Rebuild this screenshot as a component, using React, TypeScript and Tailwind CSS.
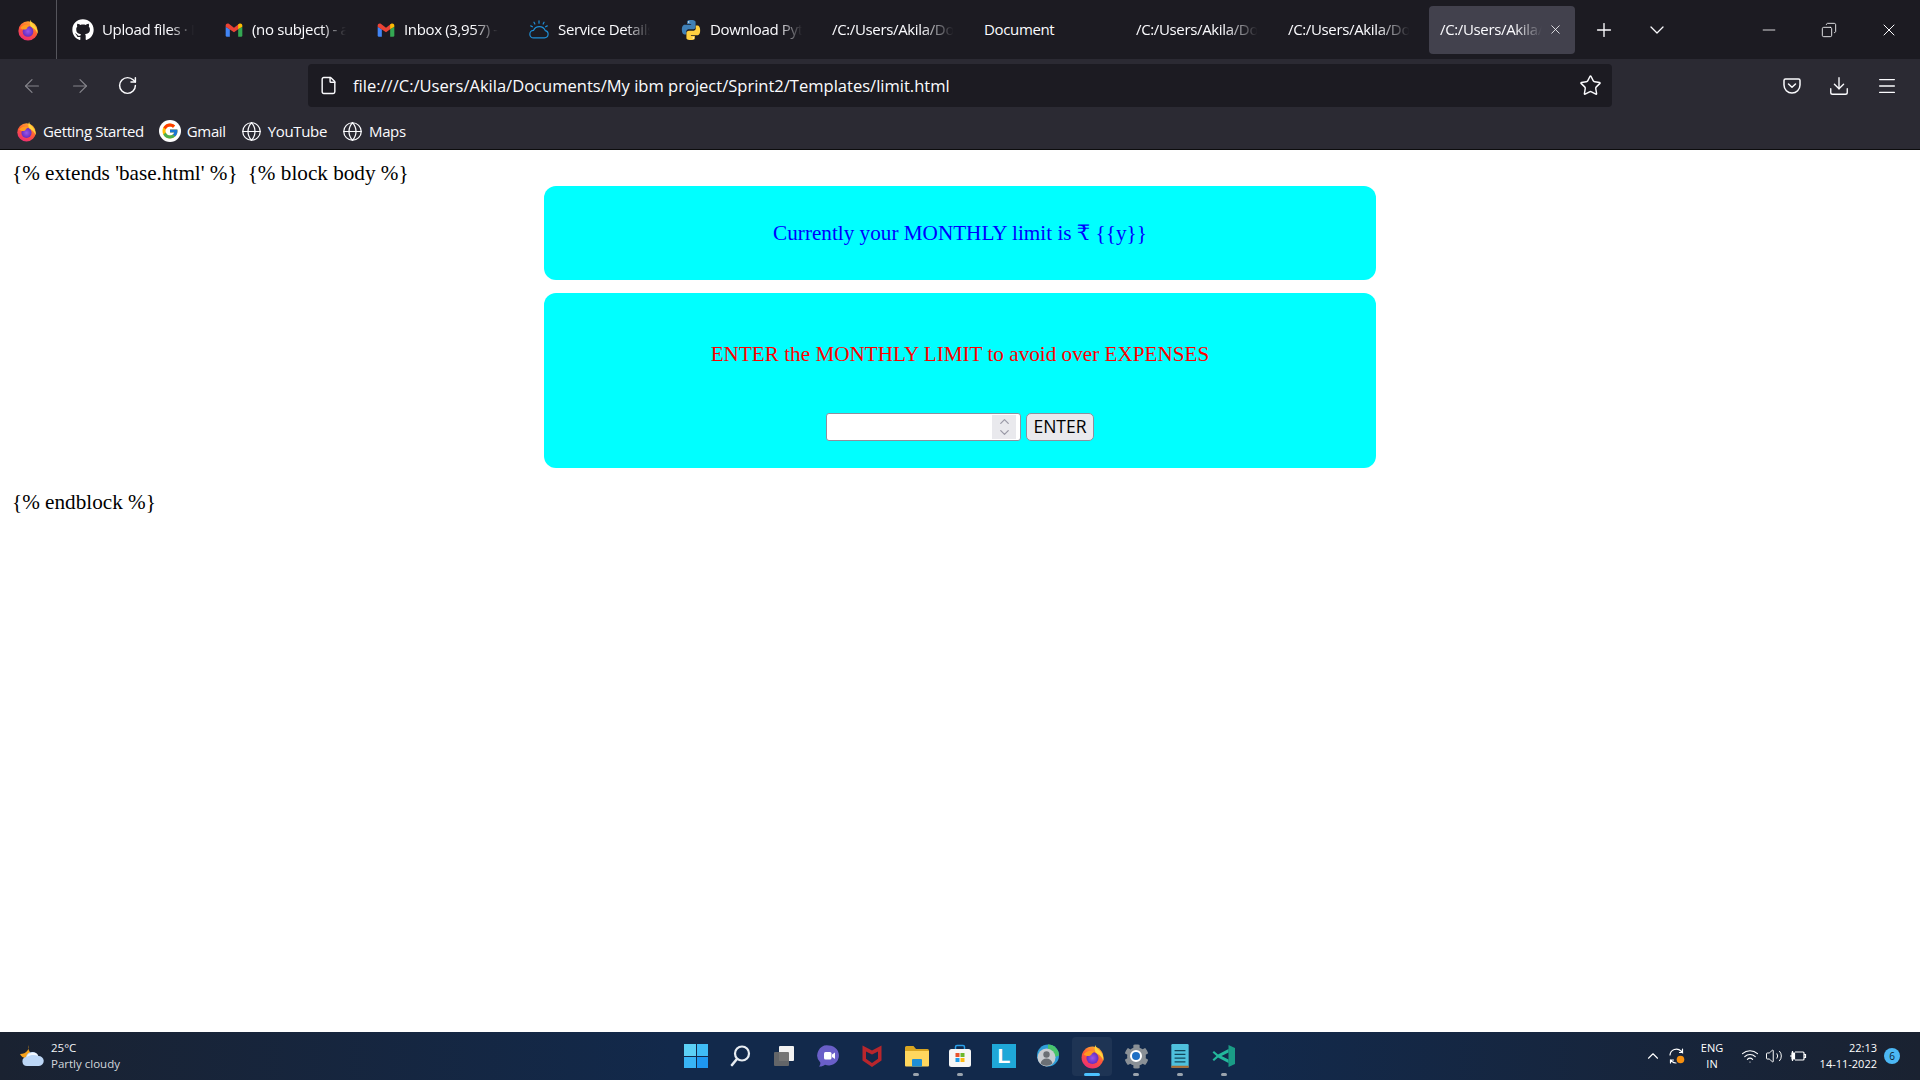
import { ArrowLeft, ArrowRight, RotateCw, File, Star, Download, Menu, Plus, ChevronDown, ChevronUp, Minus, X, Copy, Globe, Wifi, Volume2 } from "lucide-react"
import { FaGithub, FaCog } from "react-icons/fa"
import { FcGoogle } from "react-icons/fc"
import type { ReactNode } from "react"

const uiFont = "font-['Open_Sans','Noto_Sans',sans-serif]"

function Firefox({ size = 22 }: { size?: number }) {
    return (
        <svg width={size} height={size} viewBox="0 0 24 24">
            <defs>
                <linearGradient id="ffbody" x1="0.8" y1="0" x2="0.3" y2="1">
                    <stop offset="0" stopColor="#ffb52e" />
                    <stop offset="0.5" stopColor="#ff5a36" />
                    <stop offset="1" stopColor="#ec2a78" />
                </linearGradient>
                <radialGradient id="ffcore" cx="0.5" cy="0.5" r="0.6">
                    <stop offset="0" stopColor="#9a55e8" />
                    <stop offset="1" stopColor="#5a25b8" />
                </radialGradient>
            </defs>
            <circle cx="12" cy="13" r="10.500" fill="url(#ffbody)" />
            <path d="M15 .8c0 3 2.500 4 4.500 6.500 2.500 3 3.500 6 3 9-1-3.500-3.500-6-6-7-2.500-1.200-3-5-1.500-8.500z" fill="#ffd43b" />
            <circle cx="12" cy="13.500" r="5.800" fill="url(#ffcore)" />
            <path d="M3.500 10c2.500-3.500 7-4.500 10.500-2.800-1 1.300-2.500 1.400-3 2.800-.6 1.500-4 2.300-7.500 0z" fill="#ff9a1f" />
        </svg>
    )
}

function Gmail() {
    return (
        <svg width="20" height="20" viewBox="0 0 24 24">
            <path d="M2 8v10.500A1.500 1.500 0 0 0 3.500 20H7v-9z" fill="#4285f4" />
            <path d="M22 8v10.500a1.500 1.500 0 0 1-1.500 1.500H17v-9z" fill="#34a853" />
            <path d="M2 6.500C2 4.500 4.300 3.400 5.800 4.600L12 9.300l6.200-4.700c.2 2 .2 4-1.200 6.400L12 14.800 2 8z" fill="#ea4335" />
            <path d="M17 5.500l1.200-.9C19.700 3.400 22 4.500 22 6.500V8l-5 3z" fill="#fbbc04" />
        </svg>
    )
}

function IbmCloud() {
    return (
        <svg width="22" height="22" viewBox="0 0 24 24" fill="none" stroke="#1f8fd6" strokeWidth="1.300" strokeLinecap="round">
            <path d="M6 20.500h12a4 4 0 0 0 .8-7.900A7 7 0 0 0 6 12.500a4 4 0 0 0 0 8z" />
            <path d="M12 2v2.500M6.500 3.500l1 2M17.500 3.500l-1 2M3 7.500l1.800 1M21 7.500l-1.800 1" />
        </svg>
    )
}

function Python() {
    const snake = "M11.900 1C7.500 1 7.800 3 7.800 3v2.500h4.300v.7H5.400S2 5.900 2 11.500s3 5.400 3 5.400h1.800v-2.600s-.1-3 3-3h4.300s2.900 0 2.900-2.800V3.400S17.400 1 11.900 1z"
    return (
        <svg width="22" height="22" viewBox="0 0 24 24">
            <path d={snake} fill="#3f7fb5" />
            <circle cx="9.500" cy="3.300" r=".8" fill="#fff" />
            <path d={snake} fill="#ffd040" transform="rotate(180 12 12)" />
            <circle cx="14.500" cy="20.700" r=".8" fill="#fff" />
        </svg>
    )
}

function FadeTab({ icon, text, fade = true }: { icon?: ReactNode; text: string; fade?: boolean }) {
    return (
        <div className="w-[146px] h-[48px] mx-[3px] px-[11px] flex items-center gap-2 shrink-0 overflow-hidden">
            {icon}
            <span className={`whitespace-nowrap overflow-hidden flex-1 text-[15px] tracking-[-0.35px] text-[#fbfbfe] ${fade ? "[mask-image:linear-gradient(to_right,black_72%,transparent_98%)]" : ""}`}>
                {text}
            </span>
        </div>
    )
}

function TabBar() {
    return (
        <div className={`h-[59px] bg-[#1c1b22] flex items-center ${uiFont}`}>
            <div className="w-[57px] h-full border-r border-[#55555c] flex items-center justify-center shrink-0">
                <Firefox />
            </div>
            <div className="flex items-center ml-[1px]">
                <FadeTab icon={<FaGithub size={22} className="text-white shrink-0" />} text="Upload files · IBM" />
                <FadeTab icon={<Gmail />} text="(no subject) - akila" />
                <FadeTab icon={<Gmail />} text="Inbox (3,957) - akila" />
                <FadeTab icon={<IbmCloud />} text="Service Details" />
                <FadeTab icon={<Python />} text="Download Python" />
                <FadeTab text="/C:/Users/Akila/Documents" />
                <FadeTab text="Document" fade={false} />
                <FadeTab text="/C:/Users/Akila/Documents" />
                <FadeTab text="/C:/Users/Akila/Documents" />
                <div className="w-[146px] h-[48px] mx-[3px] pl-[11px] pr-[12px] flex items-center rounded-[4px] bg-[#42414d] shrink-0">
                    <span className="flex-1 whitespace-nowrap overflow-hidden text-[15px] tracking-[-0.35px] text-[#fbfbfe] [mask-image:linear-gradient(to_right,black_72%,transparent_98%)]">
                        /C:/Users/Akila/Documents
                    </span>
                    <X size={15} strokeWidth={1.300} className="text-[#fbfbfe] ml-1 shrink-0" />
                </div>
            </div>
            <Plus size={22} strokeWidth={1.500} className="text-[#fbfbfe] ml-[15px]" />
            <ChevronDown size={24} strokeWidth={1.300} className="text-[#fbfbfe] ml-[30px]" />
            <div className="ml-auto flex items-center pr-[21px] gap-[42px] text-[#fbfbfe]">
                <Minus size={20} strokeWidth={1} />
                <Copy size={16} strokeWidth={1.300} className="-scale-x-100" />
                <X size={20} strokeWidth={1.200} />
            </div>
        </div>
    )
}

function Bookmark({ icon, label }: { icon: ReactNode; label: string }) {
    return (
        <div className="flex items-center gap-[6px] mr-[15px]">
            {icon}
            <span className="text-[15px] tracking-[-0.35px] text-[#fbfbfe]">{label}</span>
        </div>
    )
}

function Toolbar() {
    return (
        <div className={`h-[91px] bg-[#2b2a33] border-b border-[#0c0c0d] ${uiFont}`}>
            <div className="h-[53px] flex items-center">
                <div className="w-[308px] pl-[21px] flex items-center gap-[26px] shrink-0">
                    <ArrowLeft size={22} strokeWidth={1.300} className="text-[#85848b]" />
                    <ArrowRight size={22} strokeWidth={1.300} className="text-[#85848b]" />
                    <RotateCw size={21} strokeWidth={1.700} className="text-[#fbfbfe]" />
                </div>
                <div className="w-[1304px] h-[43px] rounded-[4px] bg-[#1c1b22] flex items-center pl-[11px] pr-[10px] shrink-0">
                    <File size={19} strokeWidth={1.800} className="text-[#fbfbfe]" />
                    <span className="ml-[15px] pt-[2px] text-[16.550px] text-[#fbfbfe]">file:///C:/Users/Akila/Documents/My ibm project/Sprint2/Templates/limit.html</span>
                    <Star size={23} strokeWidth={1.500} className="ml-auto text-[#fbfbfe]" />
                </div>
                <div className="flex items-center text-[#fbfbfe] pl-[170px] gap-[26px]">
                    <svg width="20" height="20" viewBox="0 0 20 20" fill="none" stroke="currentColor" strokeWidth="1.500" strokeLinecap="round" strokeLinejoin="round">
                        <path d="M3.500 3h13A1.500 1.500 0 0 1 18 4.500V9a8 8 0 0 1-16 0V4.500A1.500 1.500 0 0 1 3.500 3z" />
                        <path d="M6.500 8l3.500 3.300L13.500 8" />
                    </svg>
                    <Download size={22} strokeWidth={1.500} />
                    <Menu size={22} strokeWidth={1.500} />
                </div>
            </div>
            <div className="h-[37px] pl-[16px] pt-[1px] flex items-center">
                <Bookmark icon={<Firefox size={21} />} label="Getting Started" />
                <Bookmark icon={<span className="w-[22px] h-[22px] rounded-full bg-white flex items-center justify-center"><FcGoogle size={18} /></span>} label="Gmail" />
                <Bookmark icon={<Globe size={21} strokeWidth={1.400} className="text-[#fbfbfe]" />} label="YouTube" />
                <Bookmark icon={<Globe size={21} strokeWidth={1.400} className="text-[#fbfbfe]" />} label="Maps" />
            </div>
        </div>
    )
}

function PageBody() {
    return (
        <div className="flex-1 bg-white px-[12px] pt-[11px] text-[21.200px] leading-[24px] text-black font-['Liberation_Serif','DejaVu_Serif',serif]">
            <p>
                <span>{"{% extends 'base.html' %}"}</span>
                <span className="ml-[10px]">{"{% block body %}"}</span>
            </p>
            <div className="w-[832px] h-[94px] mx-auto mt-[1px] rounded-xl bg-[#00ffff] flex items-center justify-center text-[#0000ff]">
                Currently your MONTHLY limit is ₹ {"{{y}}"}
            </div>
            <div className="w-[832px] h-[175px] mx-auto mt-[13px] pt-[49px] rounded-xl bg-[#00ffff] flex flex-col items-center">
                <p className="text-[#ff0000]">ENTER the MONTHLY LIMIT to avoid over EXPENSES</p>
                <div className={`flex gap-[5px] mt-[47px] ${uiFont}`}>
                    <div className="w-[195px] h-[28px] bg-white rounded-[3px] border border-[#8f8f9d] flex justify-end items-center pr-[4px]">
                        <div className="w-[24px] h-[24px] bg-[#e9e9ed] flex flex-col items-center justify-center text-[#9a99a6]">
                            <ChevronUp size={15} strokeWidth={2} className="-my-[2px]" />
                            <ChevronDown size={15} strokeWidth={2} className="-my-[2px]" />
                        </div>
                    </div>
                    <button className="w-[68px] h-[28px] rounded-[5px] border border-[#8f8f9d] bg-[#e9e9ed] text-[17.500px] text-black leading-none">ENTER</button>
                </div>
            </div>
            <p className="mt-[22px]">{"{% endblock %}"}</p>
        </div>
    )
}

function TaskIcon({ children, dot, active }: { children: ReactNode; dot?: boolean; active?: boolean }) {
    return (
        <div className={`relative w-[40px] h-[39px] mx-[2px] rounded-[4px] flex items-center justify-center ${active ? "bg-white/5" : ""}`}>
            {children}
            {dot && <span className="absolute bottom-[0px] left-[17px] w-[6px] h-[3px] rounded-full bg-[#9aa3ad]" />}
            {active && <span className="absolute bottom-[0px] left-[12px] w-[16px] h-[3px] rounded-full bg-[#4cc2ff]" />}
        </div>
    )
}

function TaskbarIcons() {
    return (
        <div className="flex items-center">
            <TaskIcon>
                <div className="grid grid-cols-2 gap-[1px] w-[24px] h-[24px]">
                    <span className="bg-[#5cd0f5]" />
                    <span className="bg-[#3fbcf5]" />
                    <span className="bg-[#38b4f5]" />
                    <span className="bg-[#1e97f0]" />
                </div>
            </TaskIcon>
            <TaskIcon>
                <svg width="24" height="24" viewBox="0 0 24 24" fill="none" stroke="#e8edf2" strokeLinecap="round">
                    <circle cx="14" cy="9.500" r="7" strokeWidth="2.200" />
                    <path d="M8.500 15.500L4 21" strokeWidth="2.600" />
                </svg>
            </TaskIcon>
            <TaskIcon>
                <svg width="24" height="24" viewBox="0 0 24 24">
                    <rect x="7" y="2" width="15" height="15" rx="1" fill="#f2f2f2" />
                    <rect x="2" y="8" width="15" height="14" rx="1" fill="#6a6a6a" fillOpacity=".92" />
                </svg>
            </TaskIcon>
            <TaskIcon>
                <svg width="24" height="24" viewBox="0 0 24 24">
                    <path d="M13 1.500a10 10 0 1 1-4 19.200c-1.500 1.300-3.800 2-6 1.800 1-1 1.500-2.300 1.300-4A10 10 0 0 1 13 1.500z" fill="#6a5fc8" />
                    <rect x="8" y="8" width="7.500" height="7.500" rx="1.500" fill="#fff" />
                    <path d="M16 10.500l3-2v6.500l-3-2z" fill="#fff" />
                </svg>
            </TaskIcon>
            <TaskIcon>
                <svg width="24" height="24" viewBox="0 0 24 24">
                    <path d="M2.500 1.500l9.500 5 9.500-5v15L12 23l-9.500-6.500z" fill="#b8262c" />
                    <path d="M6 7.500v7.300L12 19l6-4.200V7.500l-6 3z" fill="#12284a" />
                </svg>
            </TaskIcon>
            <TaskIcon dot>
                <svg width="25" height="24" viewBox="0 0 25 24">
                    <path d="M1 3.500A1.500 1.500 0 0 1 2.500 2h7l2.500 3h11.500A1.500 1.500 0 0 1 25 6.500V10H1z" fill="#d9a521" />
                    <path d="M1 7h24v14.500a1 1 0 0 1-1 1H2a1 1 0 0 1-1-1z" fill="#ffd75e" />
                    <rect x="8" y="15" width="10" height="7.500" rx="1" fill="#1f8fd6" />
                </svg>
            </TaskIcon>
            <TaskIcon dot>
                <svg width="24" height="24" viewBox="0 0 24 24">
                    <path d="M7.500 6V3a1.500 1.500 0 0 1 1.500-1.500h6A1.500 1.500 0 0 1 16.500 3v3" fill="none" stroke="#2aa0e8" strokeWidth="1.500" />
                    <rect x="1" y="5" width="22" height="18" rx="2.500" fill="#f6f6f6" />
                    <rect x="7.500" y="9" width="4" height="4" fill="#e8532d" />
                    <rect x="12.500" y="9" width="4" height="4" fill="#6cb82e" />
                    <rect x="7.500" y="14" width="4" height="4" fill="#1f9be8" />
                    <rect x="12.500" y="14" width="4" height="4" fill="#fdb913" />
                </svg>
            </TaskIcon>
            <TaskIcon>
                <span className="w-[24px] h-[24px] bg-[#1fa8d8] text-white font-bold text-[21px] leading-[24px] text-center font-['Liberation_Sans',sans-serif]">L</span>
            </TaskIcon>
            <TaskIcon>
                <svg width="24" height="24" viewBox="0 0 24 24">
                    <circle cx="12" cy="11.500" r="11" fill="#2f9ed8" />
                    <path d="M12 .5a11 11 0 0 1 11 11l-6 2-5-8z" fill="#49c46c" />
                    <circle cx="10.500" cy="13.500" r="9" fill="#c9ccd0" />
                    <circle cx="10.500" cy="10.500" r="3.200" fill="#6b6f74" />
                    <path d="M4.500 19.500c.8-3.500 3.200-5 6-5s5.200 1.500 6 5a9 9 0 0 1-12 0z" fill="#6b6f74" />
                </svg>
            </TaskIcon>
            <TaskIcon active>
                <Firefox size={25} />
            </TaskIcon>
            <TaskIcon dot>
                <FaCog size={25} className="text-[#8a9096]" />
                <span className="absolute left-[14px] top-[13px] w-[12px] h-[12px] rounded-full bg-[#1f6fc4] border-2 border-white" />
            </TaskIcon>
            <TaskIcon dot>
                <svg width="24" height="26" viewBox="0 0 20 24">
                    <rect x="2" y="1" width="16" height="22" rx="1" fill="#4fc0dc" />
                    <rect x="2" y="21" width="16" height="2" fill="#a86a32" />
                    <path d="M5 7h10M5 10.500h10M5 14h10M5 17.500h10" stroke="#12465a" strokeWidth="1.200" />
                </svg>
            </TaskIcon>
            <TaskIcon dot>
                <svg width="24" height="24" viewBox="0 0 24 24">
                    <path d="M16.500 1L23 4v16l-6.500 3z" fill="#1a9c86" />
                    <path d="M16.500 5v3.500L9.500 12l7 3.500V19L6 13.500 2 17l-1.500-1.500L4.500 12 .5 8.500 2 7l4 3.500z" fill="#23b89c" />
                </svg>
            </TaskIcon>
        </div>
    )
}

function Tray() {
    return (
        <div className="flex items-center justify-end h-full text-white">
            <ChevronUp size={18} strokeWidth={1.500} />
            <svg className="ml-[6px]" width="18" height="18" viewBox="0 0 18 18" fill="none" stroke="#fff" strokeWidth="1.200" strokeLinecap="round">
                <path d="M2 8a6.500 6.500 0 0 1 11-4l1.500 1.500V2M14.500 5.500h-3" />
                <path d="M2.500 16v-3h3M2.500 13L4 14.500A6 6 0 0 0 8 16" />
                <circle cx="12.500" cy="12.500" r="3.800" fill="#f7900f" stroke="none" />
            </svg>
            <div className="ml-[13px] w-[26px] text-center text-[11px] leading-[16px]">
                <div>ENG</div>
                <div>IN</div>
            </div>
            <Wifi size={18} strokeWidth={1.500} className="ml-[16px]" />
            <Volume2 size={18} strokeWidth={1.300} className="ml-[6px]" />
            <svg className="ml-[6px]" width="18" height="16" viewBox="0 0 18 16" fill="none" stroke="#fff" strokeWidth="1.200">
                <path d="M6 4h8a1 1 0 0 1 1 1v6a1 1 0 0 1-1 1H6M15 6.500h1.500v3H15" />
                <path d="M1 8h2M3 5h2.500v6H3zM3.500 3v2M3.500 11v2" fill="#fff" />
            </svg>
            <div className="ml-[10px] w-[60px] text-right text-[11px] leading-[16px]">
                <div>22:13</div>
                <div>14-11-2022</div>
            </div>
            <span className="ml-[7px] mr-[20px] w-[16px] h-[16px] rounded-full bg-[#4cb8f5] text-[#0b2030] text-[10px] leading-[16px] text-center">6</span>
        </div>
    )
}

function Taskbar() {
    return (
        <div className={`h-[48px] grid grid-cols-[1fr_auto_1fr] items-center bg-[linear-gradient(to_right,#1a2231,#12294b_35%,#12294b_65%,#1a2231)] ${uiFont}`}>
            <div className="flex items-center pl-[20px] gap-[7px]">
                <svg width="24" height="24" viewBox="0 0 24 24">
                    <path d="M9 1a7 7 0 0 0 3 9 7 7 0 0 1-6 4 7 7 0 0 1-6-4c3 0 6-1 7.500-3.500C8.500 5 9 3 9 1z" fill="#f7a21b" />
                    <path d="M7 22a4.500 4.500 0 0 1-1-8.900 6.500 6.500 0 0 1 12.300-1.200A5 5 0 0 1 19 22z" fill="#bcd6f5" />
                    <path d="M6.500 13a6.500 6.500 0 0 1 11.800-1.100c-3-1.500-8-1.500-11.800 1.100z" fill="#f2f7fd" />
                </svg>
                <div className="text-[11.500px] leading-[16px] text-[#f2f4f7]">
                    <div>25°C</div>
                    <div className="text-[#d3d7dc]">Partly cloudy</div>
                </div>
            </div>
            <TaskbarIcons />
            <Tray />
        </div>
    )
}

export default function App() {
    return (
        <div className="h-screen w-full flex flex-col overflow-hidden">
            <TabBar />
            <Toolbar />
            <PageBody />
            <Taskbar />
        </div>
    )
}
